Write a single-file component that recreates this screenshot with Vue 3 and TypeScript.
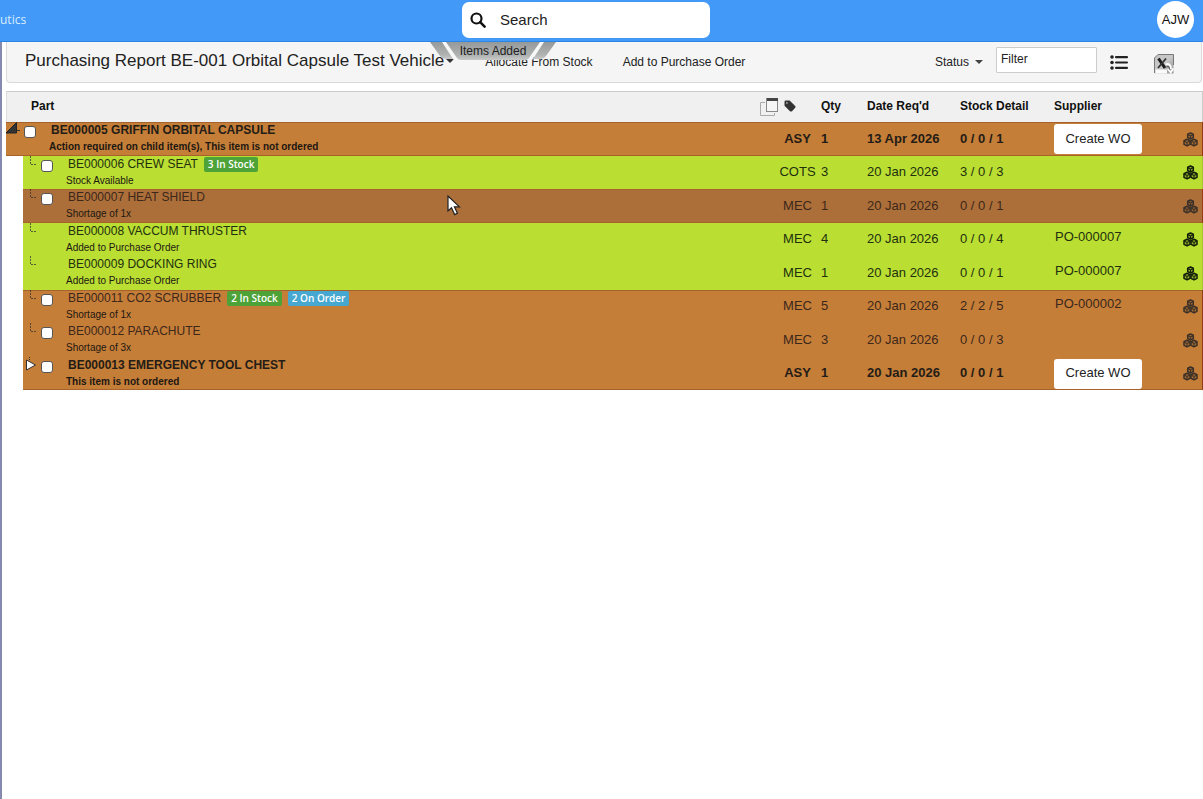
<script setup lang="ts">
import { ref } from 'vue'

interface Badge {
  text: string
  kind: 'stock' | 'order'
}

interface PartRow {
  name: string
  note: string
  tone: 'short' | 'ok'
  type: string
  qty: number
  date: string
  stock: string
  root?: boolean
  assembly?: boolean
  selectable?: boolean
  hovered?: boolean
  supplier?: string
  badges?: Badge[]
  edge?: 'top' | 'bottom' | 'both'
}

const search = ref('')
const filter = ref('')

const rows: PartRow[] = [
  { name: 'BE000005 GRIFFIN ORBITAL CAPSULE', note: 'Action required on child item(s), This item is not ordered', tone: 'short', type: 'ASY', qty: 1, date: '13 Apr 2026', stock: '0 / 0 / 1', root: true, assembly: true, selectable: true, edge: 'both' },
  { name: 'BE000006 CREW SEAT', note: 'Stock Available', tone: 'ok', type: 'COTS', qty: 3, date: '20 Jan 2026', stock: '3 / 0 / 3', selectable: true, badges: [{ text: '3 In Stock', kind: 'stock' }] },
  { name: 'BE000007 HEAT SHIELD', note: 'Shortage of 1x', tone: 'short', type: 'MEC', qty: 1, date: '20 Jan 2026', stock: '0 / 0 / 1', selectable: true, hovered: true, edge: 'both' },
  { name: 'BE000008 VACCUM THRUSTER', note: 'Added to Purchase Order', tone: 'ok', type: 'MEC', qty: 4, date: '20 Jan 2026', stock: '0 / 0 / 4', supplier: 'PO-000007' },
  { name: 'BE000009 DOCKING RING', note: 'Added to Purchase Order', tone: 'ok', type: 'MEC', qty: 1, date: '20 Jan 2026', stock: '0 / 0 / 1', supplier: 'PO-000007' },
  { name: 'BE000011 CO2 SCRUBBER', note: 'Shortage of 1x', tone: 'short', type: 'MEC', qty: 5, date: '20 Jan 2026', stock: '2 / 2 / 5', selectable: true, supplier: 'PO-000002', badges: [{ text: '2 In Stock', kind: 'stock' }, { text: '2 On Order', kind: 'order' }], edge: 'top' },
  { name: 'BE000012 PARACHUTE', note: 'Shortage of 3x', tone: 'short', type: 'MEC', qty: 3, date: '20 Jan 2026', stock: '0 / 0 / 3', selectable: true },
  { name: 'BE000013 EMERGENCY TOOL CHEST', note: 'This item is not ordered', tone: 'short', type: 'ASY', qty: 1, date: '20 Jan 2026', stock: '0 / 0 / 1', assembly: true, selectable: true, edge: 'bottom' },
]
</script>

<template>
  <div class="page">
    <header class="topbar">
      <a class="brand" href="#">utics</a>
      <label class="search">
        <svg width="16" height="16" viewBox="0 0 16 16" aria-hidden="true">
          <circle cx="6.5" cy="6.5" r="5" fill="none" stroke="#111" stroke-width="2.2" />
          <path d="M10.2 10.2 14.6 14.6" stroke="#111" stroke-width="2.6" stroke-linecap="round" />
        </svg>
        <input v-model="search" type="text" placeholder="Search" aria-label="Search" />
      </label>
      <button class="avatar" type="button">AJW</button>
    </header>

    <div class="toast" role="status">
      <svg width="126" height="19" viewBox="0 0 126 19" aria-hidden="true">
        <defs>
          <linearGradient id="toastFill" x1="0" y1="0" x2="0" y2="1">
            <stop offset="0" stop-color="#969999" />
            <stop offset="0.75" stop-color="#b0b3b2" />
            <stop offset="1" stop-color="#c8cac9" />
          </linearGradient>
        </defs>
        <path d="M12 0H18L30 18H24ZM114 0H108L96 18H102Z" fill="#f7f7f7" />
        <path d="M0 0H12L23 17H15Q12 17 10 14Z" fill="url(#toastFill)" />
        <path d="M126 0H114L103 17H111Q114 17 116 14Z" fill="url(#toastFill)" />
        <path d="M16 0H110L99 16Q98 18 95 18H31Q28 18 27 16Z" fill="url(#toastFill)" />
      </svg>
      <span>Items Added</span>
    </div>

    <main class="content">
      <div class="toolbar">
        <h1 class="title">Purchasing Report BE-001 Orbital Capsule Test Vehicle</h1>
        <button class="caret" type="button" aria-label="Report menu">
          <svg width="8" height="4" viewBox="0 0 8 4"><path d="M0 0H8L4 4Z" fill="#333" /></svg>
        </button>
        <div class="actions">
          <button type="button">Allocate From Stock</button>
          <button type="button">Add to Purchase Order</button>
        </div>
        <div class="tools">
          <button class="status" type="button">
            Status
            <svg width="8" height="4" viewBox="0 0 8 4" aria-hidden="true"><path d="M0 0H8L4 4Z" fill="#444" /></svg>
          </button>
          <input v-model="filter" class="filter" type="text" placeholder="Filter" aria-label="Filter" />
          <button class="tool" type="button" aria-label="List view">
            <svg width="18" height="15" viewBox="0 0 18 15">
              <g fill="#222">
                <circle cx="2" cy="2" r="1.8" /><circle cx="2" cy="7.5" r="1.8" /><circle cx="2" cy="13" r="1.8" />
                <rect x="5" y="1" width="13" height="2.2" rx="1" /><rect x="5" y="6.4" width="13" height="2.2" rx="1" /><rect x="5" y="11.8" width="13" height="2.2" rx="1" />
              </g>
            </svg>
          </button>
          <button class="tool excel" type="button" aria-label="Export to Excel">
            <svg width="20" height="20" viewBox="0 0 20 20">
              <defs>
                <linearGradient id="sheetFill" x1="0" y1="0" x2="1" y2="1">
                  <stop offset="0" stop-color="#c4c4c4" />
                  <stop offset="0.5" stop-color="#c8c8c8" />
                  <stop offset="1" stop-color="#8f8f8f" />
                </linearGradient>
              </defs>
              <path d="M4 .5H19.5V19.5H.5V4Z" fill="url(#sheetFill)" />
              <path d="M.5 19V4L4 .5H19.5V11" fill="none" stroke="#777" />
              <path d="M1.5 15.5H13V19.5H1.5Z" fill="#fafafa" />
              <path d="M4.5 4.5 11 14" stroke="#1c1c1c" stroke-width="3" />
              <path d="M12 4.5 4 14" stroke="#333" stroke-width="1.8" />
              <path d="M11.5 10.5C14.500 9 17 10.500 17 15M13.800 14.500 16.800 18.500 19.300 14.500" fill="none" stroke="#fff" stroke-width="1.8" />
              <path d="M12.500 12.800C14.500 12 15.200 13 15.500 15.500" fill="none" stroke="#555" stroke-width="1.2" />
            </svg>
          </button>
        </div>
      </div>

      <table class="parts">
        <colgroup>
          <col class="c-indent" /><col /><col class="c-type" /><col class="c-qty" />
          <col class="c-date" /><col class="c-stock" /><col class="c-supplier" /><col class="c-link" />
        </colgroup>
        <thead>
          <tr>
            <th class="h-part" colspan="2" scope="col">Part</th>
            <th class="h-type" scope="col" aria-label="Type">
              <div class="h-icons">
                <svg width="19" height="19" viewBox="0 0 19 19" aria-hidden="true">
                  <path d="M5 5.5H.5V18.5H14.5V16" fill="none" stroke="#aaa" />
                  <rect x="6.5" y="1.5" width="11" height="13" fill="#f6f6f6" stroke="#888" />
                  <rect x="7" y="1" width="11" height="3" fill="#444" />
                </svg>
                <svg width="12" height="12" viewBox="0 0 12 12" aria-hidden="true">
                  <path d="M.5 1.8Q.5.5 1.8.5H5.6L11.2 6Q12 7 11.2 7.8L8 11.2Q7 12 6 11.2L.5 5.8Z" fill="#333" />
                  <circle cx="2.9" cy="2.9" r=".9" fill="#aaa" />
                </svg>
              </div>
            </th>
            <th scope="col">Qty</th>
            <th scope="col">Date Req'd</th>
            <th scope="col">Stock Detail</th>
            <th scope="col">Supplier</th>
            <th aria-label="Structure"></th>
          </tr>
        </thead>
        <tbody>
          <tr
            v-for="row in rows"
            :key="row.name"
            :class="[row.tone, row.edge ? 'edge-' + row.edge : '', { assembly: row.assembly, hovered: row.hovered }]"
          >
            <td v-if="!row.root" class="indent"></td>
            <td class="part" :colspan="row.root ? 2 : 1">
              <div class="part-grid">
                <div class="tree">
                  <button v-if="row.root" type="button" class="twist" aria-label="Collapse">
                    <svg width="14" height="12" viewBox="0 0 14 12">
                      <path d="M0 11 10.5 .5V11Z" fill="#333" stroke="#222" /><path d="M11 8.5H14" stroke="#333" />
                    </svg>
                  </button>
                  <button v-else-if="row.assembly" type="button" class="twist closed" aria-label="Expand">
                    <svg width="12" height="14" viewBox="0 0 12 14">
                      <path d="M4.5 0V4" stroke="#333" stroke-dasharray="1 1" /><path d="M1.5 3V13L10.500 8Z" fill="#fff" stroke="#333" />
                    </svg>
                  </button>
                  <svg v-else class="branch" width="8" height="9" viewBox="0 0 8 9" aria-hidden="true">
                    <path d="M.5 0V8.5H7" fill="none" stroke="#333" stroke-opacity=".75" stroke-dasharray="2 1" />
                  </svg>
                </div>
                <div class="tick">
                  <input v-if="row.selectable" type="checkbox" :aria-label="'Select ' + row.name" />
                </div>
                <div class="text">
                  <div class="name">
                    <span>{{ row.name }}</span>
                    <span v-for="b in row.badges" :key="b.text" class="badge" :class="b.kind">{{ b.text }}</span>
                  </div>
                  <div class="note">{{ row.note }}</div>
                </div>
              </div>
            </td>
            <td class="type"><span>{{ row.type }}</span></td>
            <td>{{ row.qty }}</td>
            <td>{{ row.date }}</td>
            <td>{{ row.stock }}</td>
            <td class="supplier">
              <button v-if="row.assembly" class="create" type="button">Create WO</button>
              <a v-else-if="row.supplier" href="#">{{ row.supplier }}</a>
            </td>
            <td class="link">
              <button type="button" aria-label="Show structure">
                <svg width="15" height="15" viewBox="0 0 15 15">
                  <g fill-opacity=".2" stroke-width="1.5" stroke-linejoin="round">
                    <path d="M7.5 1 10.3 2.3V5.6L7.5 7 4.7 5.6V2.3Z" />
                    <path d="M4 7.3 7 8.7V12.3L4 13.8 1 12.3V8.7Z" />
                    <path d="M11 7.3 14 8.7V12.3L11 13.8 8 12.3V8.7Z" />
                  </g>
                  <path d="M5 2.8 7.5 4 10 2.8M1.4 9.2 4 10.4 6.6 9.2M8.4 9.2 11 10.4 13.6 9.2M7.5 4V6.5M4 10.4V13.2M11 10.4V13.2" fill="none" stroke-width="1.1" />
                </svg>
              </button>
            </td>
          </tr>
        </tbody>
      </table>
    </main>

    <svg class="pointer" width="14" height="21" viewBox="0 0 14 21" aria-hidden="true">
      <path d="M1 1V16L4.5 12.8 7.6 19.6 10.4 18.3 7.4 11.8H12.4Z" fill="#fff" stroke="#222" stroke-width="1.2" />
    </svg>
  </div>
</template>

<style>
body {
  margin: 0;
  background: #fff;
}
</style>

<style scoped>
.page {
  position: relative;
  min-height: 100vh;
  font-family: "Liberation Sans", Arial, sans-serif;
  font-size: 12px;
  color: #222;
}
button {
  font: inherit;
  color: inherit;
  background: none;
  border: 0;
  padding: 0;
  cursor: pointer;
}
svg {
  display: block;
}
.topbar {
  display: grid;
  grid-template-columns: 462px 248px 1fr;
  align-items: center;
  height: 39px;
  padding: 0 9px 2px 0;
  background: #4299f7;
  border-bottom: 1px solid #2c86e6;
}
.brand {
  font-family: "Open Sans", sans-serif;
  font-size: 12px;
  color: #d9ecff;
  text-decoration: none;
}
.search {
  display: flex;
  align-items: center;
  gap: 14px;
  height: 36px;
  padding: 0 8px;
  background: #fff;
  border-radius: 7px;
}
.search input {
  flex: 1;
  min-width: 0;
  border: 0;
  padding: 0;
  outline: 0;
  font: 15px "Liberation Sans", Arial, sans-serif;
  background: none;
}
.search input::placeholder,
.filter::placeholder {
  color: #222;
  opacity: 1;
}
.avatar {
  justify-self: end;
  width: 37px;
  height: 37px;
  border-radius: 50%;
  background: #fff;
  color: #111;
  font-size: 13px;
}
.toast {
  position: absolute;
  z-index: 2;
  top: 42px;
  left: 430px;
  width: 126px;
  height: 19px;
}
.toast span {
  position: absolute;
  inset: 0;
  line-height: 19px;
  text-align: center;
}
.content {
  box-sizing: border-box;
  min-height: calc(100vh - 42px);
  padding-left: 4px;
  border-left: 2px solid #8589b0;
}
.toolbar {
  display: flex;
  align-items: center;
  height: 38px;
  margin-right: 1px;
  padding: 0 27px 2px 18px;
  background: #f5f5f5;
  border: 1px solid #d9d9d9;
  border-top: 0;
  border-radius: 0 0 4px 4px;
}
.title {
  margin: 0;
  font-size: 17px;
  font-weight: 400;
  line-height: 20px;
  white-space: nowrap;
}
.caret {
  width: 8px;
  margin: 0 31px 0 2px;
}
.actions {
  display: flex;
  gap: 30px;
  padding-top: 2px;
  white-space: nowrap;
}
.tools {
  display: flex;
  align-items: center;
  margin-left: auto;
}
.status {
  display: flex;
  align-items: center;
  gap: 6px;
  margin-right: 13px;
  padding-top: 2px;
}
.filter {
  box-sizing: border-box;
  width: 101px;
  height: 26px;
  margin: 0 13px 2px 0;
  padding: 0 4px 2px;
  border: 1px solid #ccc;
  border-radius: 1px;
  font: 12px "Liberation Sans", Arial, sans-serif;
  background: #fff;
}
.tool {
  padding-top: 2px;
}
.excel {
  margin-left: 26px;
  padding-top: 5px;
}
.parts {
  width: 100%;
  margin-top: 8px;
  border-collapse: separate;
  border-spacing: 0;
  table-layout: fixed;
  font-size: 13px;
}
.c-indent { width: 17px; }
.c-type { width: 61px; }
.c-qty { width: 46px; }
.c-date { width: 93px; }
.c-stock { width: 94px; }
.c-supplier { width: 112px; }
.c-link { width: 43px; }
th {
  box-sizing: border-box;
  height: 31px;
  padding: 0 0 2px 6px;
  border-top: 1px solid #ccc;
  background: #f0f0f0;
  color: #111;
  font-size: 12px;
  text-align: left;
  white-space: nowrap;
}
th:first-child {
  border-left: 1px solid #ddd;
}
th:last-child {
  border-right: 1px solid #ccc;
}
th.h-part {
  padding-left: 24px;
}
.h-icons {
  display: flex;
  align-items: center;
  gap: 5px;
}
td {
  box-sizing: border-box;
  height: 33px;
  padding: 0 0 2px 6px;
  white-space: nowrap;
}
tr:nth-child(odd) td {
  height: 34px;
}
.short td {
  background: #c57e38;
  color: #3c271b;
}
.ok td {
  background: #bade32;
  color: #22300f;
}
.hovered td {
  background: #ac6f39;
}
.assembly td {
  color: #241c16;
  font-weight: 700;
}
tr td.indent {
  background: none;
  padding: 0;
}
.edge-top td:not(.indent) {
  box-shadow: inset 0 1px #a5622a;
}
.edge-bottom td:not(.indent) {
  box-shadow: inset 0 -1px #a5622a;
}
.edge-both td:not(.indent) {
  box-shadow: inset 0 1px #a5622a, inset 0 -1px #a5622a;
}
.short td.link {
  border-right: 1px solid #963d16;
}
.ok td.link {
  border-right: 1px solid #a5c42e;
}
tr td.part {
  padding: 0;
  vertical-align: top;
}
.part-grid {
  display: grid;
  grid-template-columns: 18px 25px 1fr;
}
.twist {
  display: block;
}
.closed {
  padding: 0 0 0 2px;
}
.branch {
  margin-left: 7px;
}
.tick input {
  appearance: none;
  display: block;
  box-sizing: border-box;
  width: 12px;
  height: 12px;
  margin: 4px 0 0;
  border: 1px solid #555;
  border-radius: 3px;
  background: #fff;
}
.tick input:checked {
  background: #337ab7;
}
.name {
  display: flex;
  align-items: center;
  gap: 6px;
  height: 16px;
  padding-left: 2px;
  font-size: 12px;
}
.note {
  height: 16px;
  font-size: 10px;
  line-height: 17px;
  color: #1c1712;
}
.badge {
  height: 15px;
  padding: 0 4px;
  border-radius: 2px;
  font: 600 10px/15px "Open Sans", sans-serif;
  color: #fff;
}
.badge.stock {
  background: #4da338;
}
.badge.order {
  background: #46a8d0;
}
tr td.type {
  padding: 0 0 2px 26px;
}
.type span {
  display: flex;
  justify-content: center;
}
.supplier a {
  display: block;
  padding: 0 0 4px 1px;
  color: inherit;
  text-decoration: none;
}
.supplier:has(.create) {
  padding-bottom: 0;
}
.create {
  display: block;
  width: 88px;
  height: 30px;
  padding-bottom: 2px;
  border-radius: 3px;
  background: #fff;
  color: #222;
  font-weight: 400;
}
tr td.link {
  padding: 0 4px 0 0;
}
.link button {
  display: block;
  margin-left: auto;
}
.link svg {
  fill: #2e2418;
  stroke: #3a3028;
}
.ok .link svg {
  fill: #111;
  stroke: #111c0a;
}
.pointer {
  position: absolute;
  top: 195px;
  left: 447px;
}
</style>
